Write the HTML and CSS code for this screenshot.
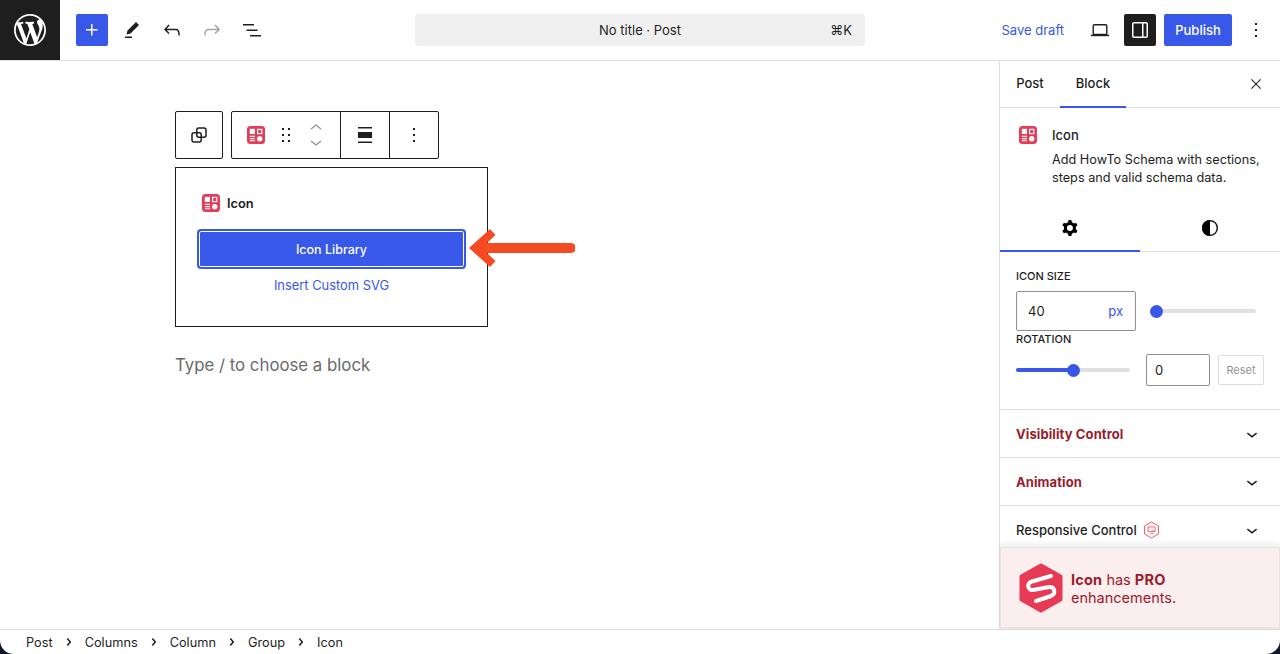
FILE: index.html
```html
<!DOCTYPE html>
<html lang="en">
<head>
<meta charset="utf-8">
<title>No title · Post</title>
<link rel="stylesheet" href="styles.css">
</head>
<body>
<svg class="defs" width="0" height="0" aria-hidden="true">
  <symbol id="block-icon" viewBox="0 0 18 18">
    <rect width="18" height="18" rx="3.5" fill="#e73a55"/>
    <rect x="2.8" y="2.8" width="5.2" height="5.2" fill="#fff"/>
    <rect x="10.6" y="3.4" width="4.2" height="4.2" fill="none" stroke="#fff" stroke-width="1.2"/>
    <path d="M2.8 10.4H8M2.8 12.6H8M2.8 14.8H8" stroke="#fff" stroke-width="1.1"/>
    <circle cx="12.7" cy="12.7" r="2.7" fill="#fff"/>
  </symbol>
  <symbol id="chev-down" viewBox="0 0 24 24"><path d="M17.5 11.6L12 16l-5.5-4.4.9-1.2L12 14l4.5-3.6 1 1.2z"/></symbol>
  <symbol id="chev-right" viewBox="0 0 24 24"><path d="M10.86 8.04l3.42 3.99-3.42 3.99-1.14-.98 2.58-3.01-2.58-3.01z"/></symbol>
</svg>

<header class="topbar">
  <div class="top-left">
    <a class="wp-logo"><svg width="32" height="32" viewBox="0 0 20 20"><path fill="#fff" d="M20 10c0-5.51-4.49-10-10-10C4.48 0 0 4.49 0 10c0 5.52 4.48 10 10 10 5.51 0 10-4.48 10-10zM7.78 15.37L4.37 6.22c.55-.02 1.17-.08 1.17-.08.5-.06.44-1.13-.06-1.11 0 0-1.45.11-2.37.11-.18 0-.37 0-.58-.01C4.12 2.69 6.87 1.11 10 1.11c2.33 0 4.45.87 6.05 2.34-.68-.11-1.65.39-1.65 1.58 0 .74.45 1.36.9 2.1.35.61.55 1.36.55 2.46 0 1.49-1.4 5-1.4 5l-3.03-8.37c.54-.02.82-.17.82-.17.5-.05.44-1.25-.06-1.22 0 0-1.44.12-2.38.12-.87 0-2.33-.12-2.33-.12-.5-.03-.56 1.2-.06 1.22l.92.08 1.26 3.41zM17.41 10c.24-.64.74-1.87.43-4.25.7 1.29 1.05 2.71 1.05 4.25 0 3.29-1.73 6.24-4.4 7.78.97-2.59 1.94-5.2 2.92-7.78zM6.1 18.09C3.12 16.65 1.11 13.53 1.11 10c0-1.3.23-2.48.72-3.59C3.25 10.3 4.67 14.2 6.1 18.09zm4.03-6.63l2.58 6.98c-.86.29-1.76.45-2.71.45-.79 0-1.57-.11-2.29-.33.81-2.38 1.62-4.74 2.42-7.1z"/></svg></a>
    <div class="tools">
      <button class="icon-btn add"><svg width="24" height="24" viewBox="0 0 24 24"><path fill="#fff" d="M11 12.5V17.5H12.5V12.5H17.5V11H12.5V6H11V11H6V12.5H11Z"/></svg></button>
      <button class="icon-btn"><svg width="24" height="24" viewBox="0 0 24 24"><path d="m19 7-3-3-8.5 8.5-1 4 4-1L19 7Zm-7 11.5H5V20h7v-1.5Z"/></svg></button>
      <button class="icon-btn"><svg width="24" height="24" viewBox="0 0 24 24"><path d="M18.3 11.7c-.6-.6-1.4-.9-2.3-.9H6.7l2.9-3.3-1.1-1-4.5 5L8.5 16l1-1-2.7-2.7H16c.5 0 .9.2 1.3.5 1 1 1 3.4 1 4.5v.3h1.5v-.2c0-1.5 0-4.3-1.5-5.7z"/></svg></button>
      <button class="icon-btn off"><svg width="24" height="24" viewBox="0 0 24 24"><path d="M15.6 6.5l-1.1 1 2.9 3.3H8c-.9 0-1.7.3-2.3.9-1.4 1.5-1.4 4.2-1.4 5.6v.2h1.5v-.3c0-1.1 0-3.5 1-4.5.3-.3.7-.5 1.3-.5h9.2L14.5 15l1.1 1.1 4.6-4.6-4.6-5z"/></svg></button>
      <button class="icon-btn"><svg width="24" height="24" viewBox="0 0 24 24"><path d="M3 6h11v1.5H3V6Zm3.5 5.5h11V13h-11v-1.5ZM21 17H10v1.5h11V17Z"/></svg></button>
    </div>
  </div>
  <div class="command">
    <span class="command-title">No title · Post</span>
    <span class="command-key">⌘K</span>
  </div>
  <div class="top-right">
    <a class="save">Save draft</a>
    <button class="icon-btn view"><svg width="24" height="24" viewBox="0 0 24 24" fill="none" stroke="#1e1e1e"><rect x="5.2" y="6.7" width="13.6" height="9.8" rx="1.3" stroke-width="1.4"/><path d="M3 17.4h18" stroke-width="1.6"/></svg></button>
    <button class="icon-btn dark"><svg width="24" height="24" viewBox="0 0 24 24"><path fill="#fff" d="M18 4H6c-1.1 0-2 .9-2 2v12c0 1.1.9 2 2 2h12c1.1 0 2-.9 2-2V6c0-1.1-.9-2-2-2zm-4 14.5H6c-.3 0-.5-.2-.5-.5V6c0-.3.2-.5.5-.5h8v13zm4.5-.5c0 .3-.2.5-.5.5h-2.5v-13H18c.3 0 .5.2.5.5v12z"/></svg></button>
    <button class="publish">Publish</button>
    <button class="icon-btn more"><svg width="24" height="24" viewBox="0 0 24 24"><path d="M13 19h-2v-2h2v2zm0-6h-2v-2h2v2zm0-6h-2V5h2v2z"/></svg></button>
  </div>
</header>

<div class="main">
  <main class="canvas">
    <div class="block-tools">
      <div class="tool-group single">
        <svg width="24" height="24" viewBox="0 0 24 24" fill="none" stroke="#1e1e1e" stroke-width="1.5"><rect x="5" y="9.8" width="9.2" height="9.2" rx="2"/><rect x="9.8" y="5" width="9.2" height="9.2" rx="2"/></svg>
      </div>
      <div class="tool-group">
        <div class="tool-cell switcher">
          <svg class="bi" width="18" height="18"><use href="#block-icon"/></svg>
          <svg class="drag" width="24" height="24" viewBox="0 0 24 24"><path d="M8 7h2V5H8v2zm0 6h2v-2H8v2zm0 6h2v-2H8v2zm6-14v2h2V5h-2zm0 8h2v-2h-2v2zm0 6h2v-2h-2v2z"/></svg>
          <div class="movers">
            <svg width="16" height="9" viewBox="0 0 16 9" fill="none" stroke="#8f8f8f" stroke-width="1.3"><path d="M3 7l5-4 5 4"/></svg>
            <svg width="16" height="9" viewBox="0 0 16 9" fill="none" stroke="#8f8f8f" stroke-width="1.3"><path d="M3 2l5 4 5-4"/></svg>
          </div>
        </div>
        <div class="tool-cell align">
          <svg width="24" height="24" viewBox="0 0 24 24"><path d="M5 4h14v1.500H5zM5 9h14v6H5zM5 18.500h14V20H5z"/></svg>
        </div>
        <div class="tool-cell options">
          <svg width="24" height="24" viewBox="0 0 24 24"><path d="M13 19h-2v-2h2v2zm0-6h-2v-2h2v2zm0-6h-2V5h2v2z"/></svg>
        </div>
      </div>
    </div>

    <section class="icon-block">
      <div class="icon-head">
        <svg width="18" height="18"><use href="#block-icon"/></svg>
        <span>Icon</span>
      </div>
      <button class="library">Icon Library</button>
      <a class="custom">Insert Custom SVG</a>
    </section>

    <p class="placeholder">Type / to choose a block</p>

    <svg class="arrow" width="106" height="38" viewBox="0 0 106 38"><path d="M0 19L21 0l5.500 6L18 14h84a5 5 0 0 1 0 10H18l8.500 8L21 38z" fill="#f54a22"/></svg>
  </main>

  <aside class="sidebar">
    <div class="side-tabs">
      <span class="side-tab">Post</span>
      <span class="side-tab active">Block</span>
      <svg class="close" width="16" height="16" viewBox="0 0 24 24"><path d="m13.06 12 6.47-6.47-1.06-1.06L12 10.94 5.53 4.47 4.47 5.53 10.94 12l-6.47 6.47 1.06 1.06L12 13.06l6.47 6.47 1.06-1.06L13.06 12Z"/></svg>
    </div>

    <div class="block-card">
      <svg width="18" height="18"><use href="#block-icon"/></svg>
      <div class="card-text">
        <h2>Icon</h2>
        <p>Add HowTo Schema with sections, steps and valid schema data.</p>
      </div>
    </div>

    <div class="setting-tabs">
      <div class="setting-tab active"><svg width="24" height="24" viewBox="0 0 24 24"><path fill-rule="evenodd" d="M10.289 4.836A1 1 0 0 1 11.275 4h1.306a1 1 0 0 1 .987.836l.244 1.466c.787.26 1.503.679 2.108 1.218l1.393-.522a1 1 0 0 1 1.216.437l.653 1.13a1 1 0 0 1-.23 1.273l-1.148.944a6.025 6.025 0 0 1 0 2.435l1.149.946a1 1 0 0 1 .23 1.272l-.653 1.13a1 1 0 0 1-1.216.437l-1.394-.522c-.605.54-1.32.958-2.108 1.218l-.244 1.466a1 1 0 0 1-.987.836h-1.306a1 1 0 0 1-.986-.836l-.244-1.466a5.995 5.995 0 0 1-2.108-1.218l-1.394.522a1 1 0 0 1-1.217-.436l-.653-1.131a1 1 0 0 1 .23-1.272l1.149-.946a6.026 6.026 0 0 1 0-2.435l-1.148-.944a1 1 0 0 1-.23-1.272l.653-1.131a1 1 0 0 1 1.217-.437l1.393.522a5.994 5.994 0 0 1 2.108-1.218l.244-1.466ZM14.929 12a3 3 0 1 1-6 0 3 3 0 0 1 6 0Z"/></svg></div>
      <div class="setting-tab"><svg width="24" height="24" viewBox="0 0 24 24"><circle cx="12" cy="12" r="7.3" fill="none" stroke="#1e1e1e" stroke-width="1.5"/><path d="M12 4a8 8 0 0 0 0 16z"/></svg></div>
    </div>

    <div class="controls">
      <label class="ctl-label">Icon size</label>
      <div class="size-row">
        <div class="num-input big"><span>40</span><span class="unit">px</span></div>
        <div class="slider size-slider"><i class="thumb thumb-start"></i></div>
      </div>
      <label class="ctl-label rot">Rotation</label>
      <div class="rot-row">
        <div class="slider rot-slider"><b class="fill"></b><i class="thumb thumb-mid"></i></div>
        <div class="num-input small"><span>0</span></div>
        <button class="reset">Reset</button>
      </div>
    </div>

    <div class="panel"><span class="panel-title red">Visibility Control</span><svg width="22" height="22"><use href="#chev-down"/></svg></div>
    <div class="panel"><span class="panel-title red">Animation</span><svg width="22" height="22"><use href="#chev-down"/></svg></div>
    <div class="panel last">
      <span class="panel-title">Responsive Control
        <svg class="pro-badge" width="17" height="18" viewBox="0 0 17 18" fill="none" stroke="#e73a55" stroke-width="1"><path d="M8.500 1l7 4v8l-7 4-7-4V5z" fill="#fdf3f4"/><path d="M5 6h7v4.500H5zM7.500 12.500h2.500M9 8.500l2 2" stroke-width=".9"/></svg>
      </span>
      <svg width="22" height="22"><use href="#chev-down"/></svg>
    </div>

    <div class="pro-banner">
      <svg width="44" height="50" viewBox="0 0 44 50"><polygon points="22,2.500 41.500,13.500 41.500,36.500 22,47.500 2.500,36.500 2.500,13.500" fill="#e73a55" stroke="#e73a55" stroke-width="4" stroke-linejoin="round"/><path d="M32 13L13 18.500C7 20.500 9 28 14 27L30 24C36 23 37 31 32 33L17 38" fill="none" stroke="#fff" stroke-width="4" stroke-linecap="round"/></svg>
      <p><b>Icon</b> has <b>PRO</b><br>enhancements.</p>
    </div>
  </aside>
</div>

<footer class="crumbs">
  <span>Post</span><svg width="24" height="24"><use href="#chev-right"/></svg>
  <span>Columns</span><svg width="24" height="24"><use href="#chev-right"/></svg>
  <span>Column</span><svg width="24" height="24"><use href="#chev-right"/></svg>
  <span>Group</span><svg width="24" height="24"><use href="#chev-right"/></svg>
  <span>Icon</span>
</footer>

<svg class="corner corner-l" width="14" height="14" viewBox="0 0 14 14"><path d="M0 0C0 8 6 14 14 14H0Z" fill="#0f1a26"/></svg>
<svg class="corner corner-r" width="14" height="14" viewBox="0 0 14 14"><path d="M14 0C14 8 8 14 0 14H14Z" fill="#0f1a26"/></svg>
</body>
</html>
```

FILE: styles.css
```css
* { box-sizing: border-box; }
html, body { margin: 0; padding: 0; }
body {
  width: 1280px;
  height: 654px;
  overflow: hidden;
  display: flex;
  flex-direction: column;
  position: relative;
  background: #fff;
  color: #1e1e1e;
  font-family: Inter, "Liberation Sans", sans-serif;
  font-size: 13px;
}
.defs { position: absolute; }
button { font: inherit; border: 0; padding: 0; background: none; color: inherit; }
svg { display: block; flex: none; }
p, h2 { margin: 0; }

.topbar {
  height: 61px;
  flex: none;
  display: flex;
  justify-content: space-between;
  align-items: center;
  border-bottom: 1px solid #e0e0e0;
  position: relative;
}
.top-left { display: flex; align-items: center; width: 415px; height: 60px; }
.wp-logo {
  width: 60px;
  height: 60px;
  background: #1e1e1e;
  display: flex;
  align-items: center;
  justify-content: center;
}
.tools { display: flex; align-items: center; gap: 8px; margin-left: 16px; }
.icon-btn {
  width: 32px;
  height: 32px;
  display: flex;
  align-items: center;
  justify-content: center;
  border-radius: 2px;
  fill: #1e1e1e;
}
.icon-btn.off { fill: #a6a6a6; }
.icon-btn.add { background: #3858e9; }
.command {
  width: 450px;
  height: 32px;
  background: #f0f0f0;
  border-radius: 4px;
  display: flex;
  align-items: center;
  justify-content: center;
  position: relative;
}
.command-key { position: absolute; right: 13px; }
.top-right { display: flex; align-items: center; width: 415px; justify-content: flex-end; padding-right: 12px; }
.save { color: #3858e9; margin-right: 20px; }
.view { margin-right: 8px; }
.dark { background: #1e1e1e; margin-right: 8px; }
.publish {
  width: 68px;
  height: 32px;
  background: #3858e9;
  color: #fff;
  border-radius: 2px;
  font-weight: 500;
}
.more { margin-left: 12px; width: 24px; }

.main { flex: 1; display: flex; min-height: 0; }
.canvas {
  flex: 1;
  padding: 50px 0 0 175px;
  position: relative;
}
.block-tools { display: flex; gap: 8px; }
.tool-group {
  height: 48px;
  display: flex;
  border: 1px solid #1e1e1e;
  border-radius: 2px;
  fill: #1e1e1e;
}
.tool-group.single { width: 48px; align-items: center; justify-content: center; }
.tool-cell { display: flex; align-items: center; justify-content: center; height: 100%; }
.switcher { width: 109px; border-right: 1px solid #1e1e1e; padding-left: 15px; justify-content: flex-start; }
.drag { margin-left: 9px; }
.movers { display: flex; flex-direction: column; gap: 8px; margin-left: 10px; }
.align { width: 49px; border-right: 1px solid #1e1e1e; }
.options { width: 48px; }

.icon-block {
  width: 313px;
  height: 160px;
  margin-top: 8px;
  border: 1px solid #1e1e1e;
  padding: 26px 21px 0 21px;
  display: flex;
  flex-direction: column;
  align-items: center;
}
.icon-head {
  align-self: stretch;
  display: flex;
  align-items: center;
  gap: 7px;
  height: 18px;
  padding-left: 5px;
  font-weight: 600;
  font-size: 12.800px;
}
.library {
  width: 269px;
  height: 40px;
  margin-top: 17px;
  flex: none;
  background: #3858e9;
  color: #fff;
  border-radius: 4px;
  border: 2px solid #3858e9;
  box-shadow: inset 0 0 0 1px #fff;
  font-weight: 500;
  font-size: 12.500px;
}
.custom { color: #3858e9; margin-top: 8px; line-height: 17px; font-size: 12.900px; }
.placeholder {
  margin-top: 26px;
  font-size: 16.800px;
  line-height: 24px;
  color: #6a6a6a;
}
.arrow { position: absolute; left: 469px; top: 168px; }

.sidebar {
  width: 281px;
  flex: none;
  border-left: 1px solid #e0e0e0;
  display: flex;
  flex-direction: column;
  position: relative;
}
.side-tabs {
  height: 47px;
  flex: none;
  display: flex;
  align-items: stretch;
  border-bottom: 1px solid #e0e0e0;
  position: relative;
}
.side-tab { width: 60px; display: flex; align-items: center; justify-content: center; font-weight: 500; padding-bottom: 2px; }
.side-tab.active { width: 66px; box-shadow: inset 0 -2px 0 #3858e9; margin-bottom: -1px; padding-bottom: 3px; }
.close { margin: auto 16px auto auto; fill: #1e1e1e; }

.block-card { display: flex; height: 97px; flex: none; padding: 18px 16px 0 19px; gap: 15px; }
.card-text h2 { font-size: 13px; font-weight: 500; line-height: 18px; }
.card-text p { margin-top: 7px; line-height: 18px; font-size: 12.700px; width: 214px; }

.setting-tabs { display: flex; height: 47px; flex: none; box-shadow: inset 0 -1px 0 #e0e0e0; }
.setting-tab { width: 140px; display: flex; align-items: center; justify-content: center; padding-bottom: 2px; }
.setting-tab.active { box-shadow: inset 0 -2px 0 #3858e9; }

.controls { padding: 16px 16px 0; height: 158px; flex: none; border-bottom: 1px solid #e0e0e0; }
.ctl-label { display: block; font-size: 11px; font-weight: 500; text-transform: uppercase; line-height: 16px; }
.size-row { display: flex; align-items: center; margin-top: 7px; }
.num-input {
  display: flex;
  align-items: center;
  justify-content: space-between;
  border: 1px solid #8f8f8f;
  border-radius: 2px;
  padding: 0 12px 0 11px;
  flex: none;
}
.num-input.big { width: 120px; height: 40px; }
.unit { color: #3858e9; }
.slider { height: 4px; border-radius: 2px; background: #e0e0e0; position: relative; }
.size-slider { width: 106px; margin-left: 14px; }
.thumb {
  position: absolute;
  top: -4.500px;
  width: 13px;
  height: 13px;
  border-radius: 50%;
  background: #3858e9;
}
.thumb-start { left: 0; }
.thumb-mid { left: 51px; }
.rot-row { display: flex; align-items: center; margin-top: 7px; }
.rot-slider { width: 114px; }
.fill { position: absolute; left: 0; top: 0; width: 57px; height: 4px; border-radius: 2px; background: #3858e9; }
.num-input.small { width: 64px; height: 32px; margin-left: 16px; padding: 0 8px; }
.reset {
  width: 46px;
  height: 30px;
  margin-left: 8px;
  border: 1px solid #ddd;
  border-radius: 2px;
  color: #949494;
  font-size: 11px;
}

.panel {
  height: 48px;
  flex: none;
  display: flex;
  align-items: center;
  justify-content: space-between;
  padding: 0 17px 0 16px;
  border-bottom: 1px solid #e0e0e0;
  fill: #1e1e1e;
}
.panel.last { border-bottom: 0; height: 41px; padding-top: 7px; }
.panel-title { font-weight: 500; display: flex; align-items: center; gap: 6px; }
.panel-title.red { color: #9b1c2a; font-weight: 700; letter-spacing: .1px; }
.pro-badge { opacity: .8; }

.pro-banner {
  flex: 1;
  display: flex;
  align-items: center;
  gap: 8px;
  padding: 0 0 0 18px;
  background: #fbeeef;
  border: 1px solid #e8e4e4;
  border-bottom-width: 2px;
  box-shadow: 0 -3px 6px rgba(0, 0, 0, .08);
  color: #9b1c2a;
  position: relative;
}
.pro-banner p { font-size: 14.500px; line-height: 18px; margin-top: 2px; }
.pro-banner b { letter-spacing: .2px; }

.crumbs {
  height: 25px;
  flex: none;
  border-top: 1px solid #e0e0e0;
  display: flex;
  align-items: center;
  padding-left: 26px;
  font-size: 12.750px;
  fill: #1e1e1e;
}
.crumbs svg { margin: 0 4px; width: 24px; }
.corner { position: absolute; bottom: 0; }
.corner-l { left: 0; }
.corner-r { right: 0; }
```
